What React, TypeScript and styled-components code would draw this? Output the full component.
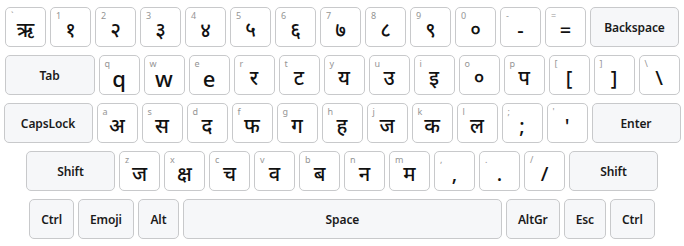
import React from 'react'
import styled, { createGlobalStyle } from 'styled-components'

const GlobalStyle = createGlobalStyle`
  html, body {
    margin: 0;
    padding: 0;
    background: #ffffff;
  }
  body {
    font-family: 'Noto Sans', 'Open Sans', sans-serif;
  }
`

const Board = styled('div')`
  width: 684px;
  padding-top: 3px;
  display: flex;
  flex-direction: column;
  align-items: center;
`

const Row = styled('div')`
  display: flex;
  justify-content: center;
`

// size: fixed width in px, or 'auto' to fit the caption
const Key = styled('div')<{ size?: number | 'auto'; special?: boolean }>`
  position: relative;
  box-sizing: border-box;
  margin: 4px 2px;
  height: 40px;
  min-width: 41px;
  width: ${props =>
    props.size === 'auto' ? 'auto' : props.size ? `${props.size}px` : '41px'};
  padding: ${props => (props.size === 'auto' ? '0 11px' : '0')};
  border: 1px solid #c8c9cb;
  border-radius: 5px;
  background-color: ${props => (props.special ? '#f6f7f9' : '#ffffff')};
  display: flex;
  align-items: center;
  justify-content: center;
  color: #111;
`

const Label = styled('span')`
  position: absolute;
  top: 2px;
  left: 5px;
  font-size: 9px;
  line-height: 11px;
  color: #959595;
  font-family: 'Noto Sans', 'DejaVu Sans', sans-serif;
`

const Glyph = styled('span')<{ latin?: boolean }>`
  font-size: ${props => (props.latin ? '22px' : '20px')};
  font-weight: 500;
  line-height: 1;
  margin-top: 6px;
  font-family: 'Noto Sans', 'Noto Sans Devanagari', 'DejaVu Sans', sans-serif;
`

const Caption = styled('span')`
  font-size: 12px;
  font-weight: 600;
  color: #1a1a1a;
  letter-spacing: -0.1px;
`

type CharKey = [string, string]

const rows: { left?: [string, number]; keys: CharKey[]; right?: [string, number] }[] = [
  {
    keys: [
      ['`', 'ऋ'], ['1', '१'], ['2', '२'], ['3', '३'], ['4', '४'], ['5', '५'], ['6', '६'],
      ['7', '७'], ['8', '८'], ['9', '९'], ['0', '०'], ['-', '-'], ['=', '='],
    ],
    right: ['Backspace', 89],
  },
  {
    left: ['Tab', 90],
    keys: [
      ['q', 'q'], ['w', 'w'], ['e', 'e'], ['r', 'र'], ['t', 'ट'], ['y', 'य'], ['u', 'उ'],
      ['i', 'इ'], ['o', '०'], ['p', 'प'], ['[', '['], [']', ']'], ['\\', '\\'],
    ],
  },
  {
    left: ['CapsLock', 89],
    keys: [
      ['a', 'अ'], ['s', 'स'], ['d', 'द'], ['f', 'फ'], ['g', 'ग'], ['h', 'ह'], ['j', 'ज'],
      ['k', 'क'], ['l', 'ल'], [';', ';'], ["'", "'"],
    ],
    right: ['Enter', 89],
  },
  {
    left: ['Shift', 89],
    keys: [
      ['z', 'ज'], ['x', 'क्ष'], ['c', 'च'], ['v', 'व'], ['b', 'ब'], ['n', 'न'], ['m', 'म'],
      [',', ','], ['.', '.'], ['/', '/'],
    ],
    right: ['Shift', 89],
  },
]

const bottom = ['Ctrl', 'Emoji', 'Alt', 'Space', 'AltGr', 'Esc', 'Ctrl']

const isLatin = (c: string) => /^[a-z]$/.test(c)

export default function App() {
  return (
    <>
      <GlobalStyle />
      <Board>
        {rows.map((row, i) => (
          <Row key={i}>
            {row.left && (
              <Key special size={row.left[1]}>
                <Caption>{row.left[0]}</Caption>
              </Key>
            )}
            {row.keys.map(([label, glyph]) => (
              <Key key={label}>
                <Label>{label}</Label>
                <Glyph latin={isLatin(glyph)}>{glyph}</Glyph>
              </Key>
            ))}
            {row.right && (
              <Key special size={row.right[1]}>
                <Caption>{row.right[0]}</Caption>
              </Key>
            )}
          </Row>
        ))}
        <Row>
          {bottom.map((name, i) => (
            <Key key={i} special size={name === 'Space' ? 319 : 'auto'}>
              <Caption>{name}</Caption>
            </Key>
          ))}
        </Row>
      </Board>
    </>
  )
}
